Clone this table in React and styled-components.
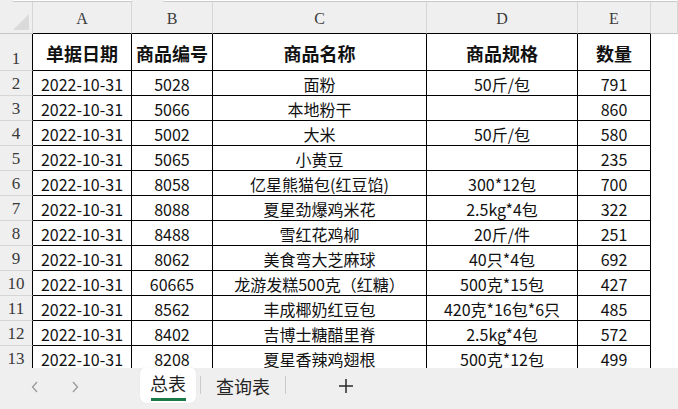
import React from 'react';
import styled, { createGlobalStyle } from 'styled-components';

const GlobalStyle = createGlobalStyle`
  html, body {
    margin: 0;
    padding: 0;
    background: #ffffff;
  }
`;

const COLS = [
  { key: 'A', width: 99 },
  { key: 'B', width: 81 },
  { key: 'C', width: 214 },
  { key: 'D', width: 151 },
  { key: 'E', width: 73 },
];

const HEAD = ['单据日期', '商品编号', '商品名称', '商品规格', '数量'];

const ROWS = [
  ['2022-10-31', '5028', '面粉', '50斤/包', '791'],
  ['2022-10-31', '5066', '本地粉干', '', '860'],
  ['2022-10-31', '5002', '大米', '50斤/包', '580'],
  ['2022-10-31', '5065', '小黄豆', '', '235'],
  ['2022-10-31', '8058', '亿星熊猫包(红豆馅)', '300*12包', '700'],
  ['2022-10-31', '8088', '夏星劲爆鸡米花', '2.5kg*4包', '322'],
  ['2022-10-31', '8488', '雪红花鸡柳', '20斤/件', '251'],
  ['2022-10-31', '8062', '美食弯大芝麻球', '40只*4包', '692'],
  ['2022-10-31', '60665', '龙游发糕500克（红糖）', '500克*15包', '427'],
  ['2022-10-31', '8562', '丰成椰奶红豆包', '420克*16包*6只', '485'],
  ['2022-10-31', '8402', '吉博士糖醋里脊', '2.5kg*4包', '572'],
  ['2022-10-31', '8208', '夏星香辣鸡翅根', '500克*12包', '499'],
];

const Page = styled.div`
  display: flex;
  flex-direction: column;
  width: 678px;
  height: 409px;
  overflow: hidden;
  background: #efefef;
`;

const TopStrip = styled.div`
  display: flex;
  height: 2px;
  flex-shrink: 0;
  background: #efefef;
`;

const TopBox = styled.div`
  width: ${p => p.$w}px;
  margin-left: ${p => p.$ml}px;
  height: 1px;
  background: #ffffff;
  border-bottom: 1px solid #c8c8c8;
  border-radius: 0 0 3px 3px;
`;

const Sheet = styled.div`
  flex: 1;
  overflow: hidden;
  background: #ffffff;
  font-family: "Noto Sans CJK SC", "Noto Sans", sans-serif;
`;

const Grid = styled.div`
  display: grid;
  grid-template-columns: 33px ${COLS.map(c => c.width + 'px').join(' ')} 1fr;
  grid-template-rows: 32px 37px;
  grid-auto-rows: 25px;
`;

const Corner = styled.div`
  box-sizing: border-box;
  background: #efefef;
  border-right: 1px solid #d6d6d6;
  border-bottom: 1px solid #c6c6c6;
  position: relative;
  &::after {
    content: '';
    position: absolute;
    right: 3px;
    bottom: 3px;
    width: 0;
    height: 0;
    border-left: 16px solid transparent;
    border-bottom: 16px solid #dadada;
  }
`;

const ColHead = styled.div`
  box-sizing: border-box;
  background: #efefef;
  border-right: 1px solid #d6d6d6;
  border-bottom: 1px solid ${p => (p.$edge ? '#c6c6c6' : '#000')};
  display: flex;
  align-items: center;
  justify-content: center;
  padding-top: 3px;
  font-family: "Liberation Serif", "DejaVu Serif", serif;
  font-size: 16px;
  color: #3c3c3c;
`;

const RowHead = styled.div`
  box-sizing: border-box;
  background: #efefef;
  border-right: 1px solid #000;
  border-bottom: 1px solid #d6d6d6;
  display: flex;
  align-items: flex-end;
  justify-content: center;
  padding-bottom: 1px;
  font-family: "Liberation Serif", "DejaVu Serif", serif;
  font-size: 17px;
  line-height: 20px;
  color: #3a3a3a;
`;

const Cell = styled.div`
  box-sizing: border-box;
  border-right: 1px solid #000;
  border-bottom: 1px solid #000;
  display: flex;
  align-items: center;
  justify-content: center;
  white-space: nowrap;
  overflow: hidden;
  font-size: ${p => (p.$head ? 18 : 16)}px;
  font-weight: ${p => (p.$head ? 700 : 400)};
  color: #111;
  padding-top: 1px;
`;

const Blank = styled.div`
  background: #ffffff;
`;

const TabBar = styled.div`
  height: 41px;
  flex-shrink: 0;
  display: flex;
  align-items: flex-start;
  background: #efefef;
  font-family: "Noto Sans CJK SC", "Noto Sans", sans-serif;
`;

const Nav = styled.div`
  width: 140px;
  height: 37px;
  display: flex;
  align-items: center;
  padding-left: 30px;
  gap: 30px;
  box-sizing: border-box;
`;

const ActiveTab = styled.div`
  width: 56px;
  height: 36px;
  margin-top: -1px;
  background: #ffffff;
  border-radius: 6px;
  display: flex;
  flex-direction: column;
  align-items: center;
  justify-content: center;
  font-size: 18px;
  color: #1f1f1f;
  box-shadow: 0 0 1px rgba(0, 0, 0, 0.15);
`;

const TabLabel = styled.span`
  line-height: 22px;
  margin-top: 2px;
`;

const Underline = styled.div`
  width: 35px;
  height: 3px;
  margin-top: 4px;
  background: #1c7a48;
`;

const Sep = styled.div`
  width: 1px;
  height: 18px;
  margin-top: 8px;
  margin-left: ${p => p.$ml || 0}px;
  background: #c9c9c9;
`;

const Tab = styled.div`
  height: 36px;
  padding: 0 15px;
  display: flex;
  align-items: center;
  font-size: 18px;
  color: #262626;
`;

const AddBtn = styled.div`
  height: 36px;
  width: 30px;
  margin-left: 45px;
  display: flex;
  align-items: center;
  justify-content: center;
`;

function Chevron({ dir }) {
  return (
    <svg width="10" height="14" viewBox="0 0 10 14">
      <path
        d={dir === 'left' ? 'M7 2 L2.5 7 L7 12' : 'M3 2 L7.5 7 L3 12'}
        fill="none"
        stroke="#9a9a9a"
        strokeWidth="1.3"
      />
    </svg>
  );
}

function Plus() {
  return (
    <svg width="16" height="16" viewBox="0 0 16 16">
      <path d="M8 1 V15 M1 8 H15" stroke="#2a2a2a" strokeWidth="1.5" />
    </svg>
  );
}

export default function App() {
  return (
    <>
      <GlobalStyle />
      <Page>
        <TopStrip>
          <TopBox $ml={12} $w={121} />
          <TopBox $ml={30} $w={515} />
        </TopStrip>
        <Sheet>
          <Grid>
            <Corner />
            {COLS.map(c => (
              <ColHead key={c.key}>{c.key}</ColHead>
            ))}
            <ColHead $edge />

            <RowHead>1</RowHead>
            {HEAD.map(h => (
              <Cell key={h} $head>{h}</Cell>
            ))}
            <Blank />

            {ROWS.map((r, i) => (
              <React.Fragment key={i}>
                <RowHead>{i + 2}</RowHead>
                {r.map((v, j) => (
                  <Cell key={j}>{v}</Cell>
                ))}
                <Blank />
              </React.Fragment>
            ))}
          </Grid>
        </Sheet>
        <TabBar>
          <Nav>
            <Chevron dir="left" />
            <Chevron dir="right" />
          </Nav>
          <ActiveTab>
            <TabLabel>总表</TabLabel>
            <Underline />
          </ActiveTab>
          <Sep $ml={4} />
          <Tab>查询表</Tab>
          <Sep />
          <AddBtn>
            <Plus />
          </AddBtn>
        </TabBar>
      </Page>
    </>
  );
}
